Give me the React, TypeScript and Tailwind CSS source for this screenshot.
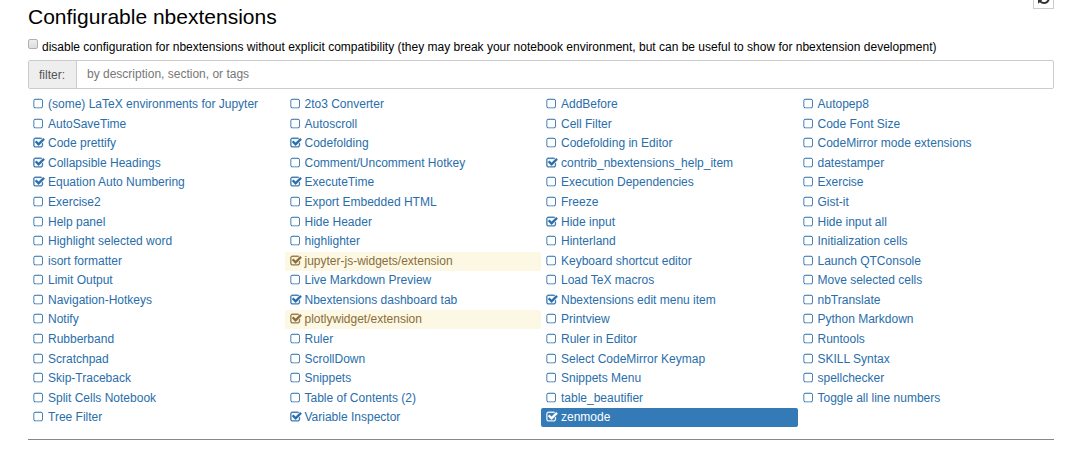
import { useState } from "react";

type Extension = {
  name: string;
  enabled?: boolean;
  incompatible?: boolean;
};

const extensions: Extension[] = [
  { name: "(some) LaTeX environments for Jupyter" },
  { name: "2to3 Converter" },
  { name: "AddBefore" },
  { name: "Autopep8" },
  { name: "AutoSaveTime" },
  { name: "Autoscroll" },
  { name: "Cell Filter" },
  { name: "Code Font Size" },
  { name: "Code prettify", enabled: true },
  { name: "Codefolding", enabled: true },
  { name: "Codefolding in Editor" },
  { name: "CodeMirror mode extensions" },
  { name: "Collapsible Headings", enabled: true },
  { name: "Comment/Uncomment Hotkey" },
  { name: "contrib_nbextensions_help_item", enabled: true },
  { name: "datestamper" },
  { name: "Equation Auto Numbering", enabled: true },
  { name: "ExecuteTime", enabled: true },
  { name: "Execution Dependencies" },
  { name: "Exercise" },
  { name: "Exercise2" },
  { name: "Export Embedded HTML" },
  { name: "Freeze" },
  { name: "Gist-it" },
  { name: "Help panel" },
  { name: "Hide Header" },
  { name: "Hide input", enabled: true },
  { name: "Hide input all" },
  { name: "Highlight selected word" },
  { name: "highlighter" },
  { name: "Hinterland" },
  { name: "Initialization cells" },
  { name: "isort formatter" },
  { name: "jupyter-js-widgets/extension", enabled: true, incompatible: true },
  { name: "Keyboard shortcut editor" },
  { name: "Launch QTConsole" },
  { name: "Limit Output" },
  { name: "Live Markdown Preview" },
  { name: "Load TeX macros" },
  { name: "Move selected cells" },
  { name: "Navigation-Hotkeys" },
  { name: "Nbextensions dashboard tab", enabled: true },
  { name: "Nbextensions edit menu item", enabled: true },
  { name: "nbTranslate" },
  { name: "Notify" },
  { name: "plotlywidget/extension", enabled: true, incompatible: true },
  { name: "Printview" },
  { name: "Python Markdown" },
  { name: "Rubberband" },
  { name: "Ruler" },
  { name: "Ruler in Editor" },
  { name: "Runtools" },
  { name: "Scratchpad" },
  { name: "ScrollDown" },
  { name: "Select CodeMirror Keymap" },
  { name: "SKILL Syntax" },
  { name: "Skip-Traceback" },
  { name: "Snippets" },
  { name: "Snippets Menu" },
  { name: "spellchecker" },
  { name: "Split Cells Notebook" },
  { name: "Table of Contents (2)" },
  { name: "table_beautifier" },
  { name: "Toggle all line numbers" },
  { name: "Tree Filter" },
  { name: "Variable Inspector", enabled: true },
  { name: "zenmode", enabled: true },
];

function SquareIcon() {
  return (
    <svg viewBox="128 0 1792 1792" fill="currentColor" className="size-3" aria-hidden="true">
      <path d="M1312 256h-832q-66 0-113 47t-47 113v832q0 66 47 113t113 47h832q66 0 113-47t47-113v-832q0-66-47-113t-113-47zm288 160v832q0 119-84.5 203.5t-203.5 84.5h-832q-119 0-203.5-84.5t-84.5-203.5v-832q0-119 84.5-203.5t203.5-84.5h832q119 0 203.5 84.5t84.5 203.5z" />
    </svg>
  );
}

function CheckSquareIcon() {
  return (
    <svg
      viewBox="0 0 1792 1792"
      fill="currentColor"
      stroke="currentColor"
      strokeWidth="50"
      className="size-3"
      aria-hidden="true"
    >
      <path d="M1472 930v318q0 119-84.5 203.5t-203.5 84.5h-832q-119 0-203.5-84.5t-84.5-203.5v-832q0-119 84.5-203.5t203.5-84.5h832q63 0 117 25 15 7 18 23 3 17-9 29l-49 49q-10 10-23 10-3 0-9-2-23-6-45-6h-832q-66 0-113 47t-47 113v832q0 66 47 113t113 47h832q66 0 113-47t47-113v-254q0-13 9-22l64-64q10-10 23-10 6 0 12 3 20 8 20 29zm231-489l-814 814q-24 24-57 24t-57-24l-430-430q-24-24-24-57t24-57l110-110q24-24 57-24t57 24l263 263 647-647q24-24 57-24t57 24l110 110q24 24 24 57t-24 57z" />
    </svg>
  );
}

function RefreshIcon() {
  return (
    <svg viewBox="0 0 1536 1536" fill="currentColor" className="size-3" aria-hidden="true">
      <path d="M1511 928q0 5-1 7-64 268-268 434.500t-478 166.500q-146 0-282.500-55t-243.500-157l-129 129q-19 19-45 19t-45-19-19-45v-448q0-26 19-45t45-19h448q26 0 45 19t19 45-19 45l-137 137q71 66 161 102t187 36q134 0 250-65t186-179q11-17 53-117 8-23 30-23h192q13 0 22.500 9.500t9.500 22.500zm25-800v448q0 26-19 45t-45 19h-448q-26 0-45-19t-19-45 19-45l138-138q-148-137-349-137-134 0-250 65t-186 179q-11 17-53 117-8 23-30 23h-199q-13 0-22.500-9.500t-9.500-22.500v-7q65-268 270-434.500t480-166.500q146 0 284 55.500t245 156.500l130-129q19-19 45-19t45 19 19 45z" />
    </svg>
  );
}

type ItemProps = {
  ext: Extension;
  checked: boolean;
  selected: boolean;
  onToggle: () => void;
  onSelect: () => void;
};

function ExtensionItem({ ext, checked, selected, onToggle, onSelect }: ItemProps) {
  let colors = "text-[#296eaa]";
  if (ext.incompatible) colors = "bg-[#fcf8e3] text-[#8a6d3b]";
  if (selected) colors = "bg-[#337ab7] text-white";

  return (
    <li className={`flex h-[19px] items-center gap-[3px] rounded-xs px-[5px] ${colors}`}>
      <span className="relative shrink-0 pb-px">
        <input
          type="checkbox"
          aria-label={`Enable ${ext.name}`}
          checked={checked}
          onChange={onToggle}
          className="absolute inset-0 cursor-pointer appearance-none"
        />
        {checked ? <CheckSquareIcon /> : <SquareIcon />}
      </span>
      <a
        href="#"
        onClick={(e) => {
          e.preventDefault();
          onSelect();
        }}
        className="grow whitespace-nowrap"
      >
        {ext.name}
      </a>
    </li>
  );
}

export default function App() {
  const [filter, setFilter] = useState("");
  const [disableConfig, setDisableConfig] = useState(false);
  const [selected, setSelected] = useState("zenmode");
  const [enabled, setEnabled] = useState<string[]>(
    extensions.filter((ext) => ext.enabled).map((ext) => ext.name)
  );

  function toggle(name: string) {
    setEnabled((prev) =>
      prev.includes(name) ? prev.filter((n) => n !== name) : [...prev, name]
    );
  }

  const visible = extensions.filter((ext) =>
    ext.name.toLowerCase().includes(filter.toLowerCase())
  );

  return (
    <main className="bg-white pr-[25px] pl-7 font-['Liberation_Sans',Arial,sans-serif] text-[12px] leading-[17px] text-black">
      <header className="flex items-start justify-between">
        <h1 className="pt-1 text-[21px] leading-[26px]">Configurable nbextensions</h1>
        <button
          type="button"
          aria-label="Refresh"
          className="-mt-3 flex h-[21px] w-[21px] items-center justify-center border border-[#ccc] bg-white pb-px text-[#333]"
        >
          <RefreshIcon />
        </button>
      </header>

      <label className="mt-[9px] flex gap-1">
        <input
          type="checkbox"
          checked={disableConfig}
          onChange={(e) => setDisableConfig(e.target.checked)}
          className="size-[10px] shrink-0 appearance-none rounded-xs border border-[#b0b0b0] bg-linear-to-b from-[#eee] to-[#ddd] checked:bg-[#337ab7]"
        />
        <span>
          disable configuration for nbextensions without explicit compatibility (they may break
          your notebook environment, but can be useful to show for nbextension development)
        </span>
      </label>

      <div className="mt-1 flex h-[29px] rounded-xs border border-[#ccc]">
        <label
          htmlFor="filter"
          className="flex items-center border-r border-[#ccc] bg-[#eee] pt-px pr-[11px] pl-[10px] text-[#555]"
        >
          filter:
        </label>
        <input
          id="filter"
          type="text"
          value={filter}
          onChange={(e) => setFilter(e.target.value)}
          placeholder="by description, section, or tags"
          className="min-w-0 grow px-[10px] outline-none placeholder:text-[#777]"
        />
      </div>

      <ul className="mt-[6px] grid h-[333px] auto-rows-fr grid-cols-4">
        {visible.map((ext) => (
          <ExtensionItem
            key={ext.name}
            ext={ext}
            checked={enabled.includes(ext.name)}
            selected={selected === ext.name}
            onToggle={() => toggle(ext.name)}
            onSelect={() => setSelected(ext.name)}
          />
        ))}
      </ul>

      <hr className="mt-[11px] border-[#888]" />
    </main>
  );
}
